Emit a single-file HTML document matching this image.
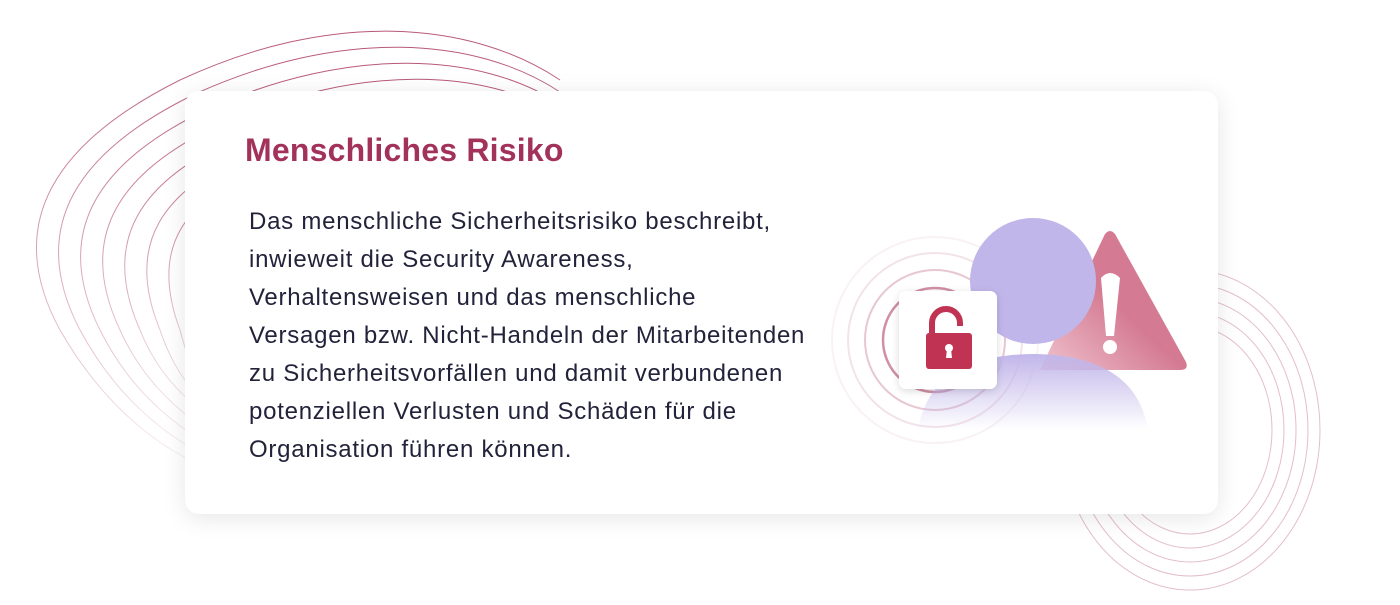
<!DOCTYPE html>
<html><head><meta charset="utf-8"><style>
body{margin:0;width:1400px;height:605px;background:#fff;position:relative;overflow:hidden;font-family:"Liberation Sans",sans-serif}
.card{position:absolute;left:185px;top:91px;width:1033px;height:423px;background:#fff;border-radius:14px;box-shadow:0 4px 24px rgba(0,0,0,0.10)}
h1{position:absolute;left:60px;top:41px;margin:0;font-size:32px;font-weight:bold;color:#a3325a;letter-spacing:0.2px;white-space:nowrap}
p{position:absolute;left:64px;top:112px;margin:0;font-size:24px;line-height:38px;color:#22223a;letter-spacing:0.75px;white-space:nowrap}
svg{position:absolute;left:0;top:0}
</style></head><body>
<svg width="1400" height="605">
<defs>
<linearGradient id="fl" x1="0" y1="0" x2="0" y2="1"><stop offset="0" stop-color="#b0456a" stop-opacity=".9"/><stop offset="1" stop-color="#b0456a" stop-opacity=".1"/></linearGradient>
</defs>
<g fill="none" stroke="url(#fl)" stroke-width="1">
<path d="M560 80 C470 20 330 10 180 80 C60 140 0 220 60 330 C100 400 150 440 190 460"/>
<path d="M560 92 C475 36 340 28 195 94 C80 150 25 225 80 330 C115 395 160 430 195 450"/>
<path d="M560 104 C480 52 350 46 210 108 C100 160 50 230 100 330 C130 390 170 420 200 440"/>
<path d="M560 116 C485 68 360 64 225 122 C120 170 75 235 120 330 C145 385 180 410 205 430"/>
<path d="M560 128 C490 84 370 82 240 136 C140 180 100 240 140 330 C160 380 190 400 210 420"/>
<path d="M560 140 C495 100 380 100 255 150 C160 190 125 245 160 330 C175 375 195 392 210 410"/>
<path d="M560 152 C500 116 390 118 270 164 C180 200 150 250 180 330 C190 368 200 385 210 400"/>
<path d="M560 164 C505 132 400 136 285 178 C200 210 175 255 200 330"/>
</g>
<g fill="none" stroke="#b0456a" stroke-opacity=".35">
<ellipse cx="1190" cy="430" rx="130" ry="160"/>
<ellipse cx="1190" cy="430" rx="118" ry="146"/>
<ellipse cx="1190" cy="430" rx="106" ry="132"/>
<ellipse cx="1190" cy="430" rx="94" ry="118"/>
<ellipse cx="1190" cy="430" rx="82" ry="104"/>
</g>
</svg>
<div class="card">
<h1>Menschliches Risiko</h1>
<p>Das menschliche Sicherheitsrisiko beschreibt,<br>inwieweit die Security Awareness,<br>Verhaltensweisen und das menschliche<br>Versagen bzw. Nicht-Handeln der Mitarbeitenden<br>zu Sicherheitsvorfällen und damit verbundenen<br>potenziellen Verlusten und Schäden für die<br>Organisation führen können.</p>
</div>
<svg width="1400" height="605">
<defs>
<linearGradient id="tri" x1="0" y1="1" x2="1" y2="0"><stop offset="0" stop-color="#f0c4cf"/><stop offset=".5" stop-color="#d47a92"/><stop offset="1" stop-color="#d47a92"/></linearGradient>
<linearGradient id="bd" x1="0" y1="0" x2="0" y2="1"><stop offset="0" stop-color="#c1b6ea"/><stop offset="1" stop-color="#c1b6ea" stop-opacity="0"/></linearGradient>
<filter id="sh" x="-30%" y="-30%" width="160%" height="160%"><feDropShadow dx="0" dy="2" stdDeviation="4" flood-opacity=".15"/></filter>
</defs>
<g fill="none" stroke="#b0456a">
<circle cx="935" cy="340" r="52" stroke-opacity=".6" stroke-width="2.5"/>
<circle cx="935" cy="340" r="70" stroke-opacity=".3" stroke-width="2"/>
<circle cx="935" cy="340" r="87" stroke-opacity=".15" stroke-width="2"/>
<circle cx="935" cy="340" r="103" stroke-opacity=".07" stroke-width="2"/>
</g>
<path d="M1105 234 Q1110 228 1115 234 L1186 362 Q1189 370 1180 370 L1040 370 Z" fill="url(#tri)"/>
<path d="M1101 278 Q1110 268 1120 278 L1114 336 L1106 336 Z" fill="#fff"/>
<circle cx="1110" cy="347" r="7" fill="#fff"/>
<circle cx="1033" cy="281" r="63" fill="#c1b6ea"/>
<path d="M918 430 Q930 355 1033 354 Q1136 355 1148 430 Z" fill="url(#bd)"/>
<rect x="899" y="291" width="98" height="98" rx="7" fill="#fff" filter="url(#sh)"/>
<path d="M932 333 V323 A14 14 0 0 1 960 323 V326" fill="none" stroke="#c03353" stroke-width="6"/>
<rect x="926" y="333" width="46" height="36" rx="3" fill="#c03353"/>
<circle cx="949" cy="348" r="4" fill="#fff"/>
<path d="M947 349 L951 349 L952 358 L946 358 Z" fill="#fff"/>
</svg>
</body></html>
